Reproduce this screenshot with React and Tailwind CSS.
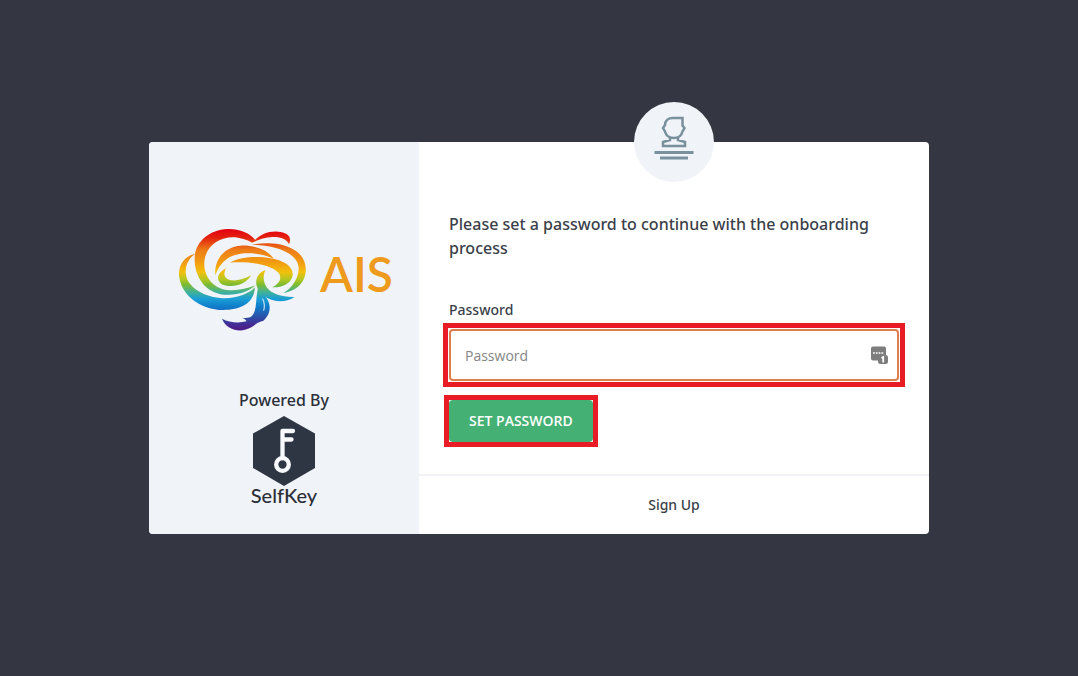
import { useState } from "react";

function AisLogo() {
  return (
    <svg width="145" height="120" viewBox="0 0 435 360" role="img" aria-label="AIS logo" className="shrink-0">
      <defs>
        <linearGradient id="rainbow" gradientUnits="userSpaceOnUse" x1="0" y1="28" x2="0" y2="334">
          <stop offset="0" stopColor="#e3000f" />
          <stop offset="0.08" stopColor="#e3200f" />
          <stop offset="0.2" stopColor="#ec7c18" />
          <stop offset="0.32" stopColor="#f29a12" />
          <stop offset="0.42" stopColor="#f2c00c" />
          <stop offset="0.49" stopColor="#b5c722" />
          <stop offset="0.54" stopColor="#7fbb2e" />
          <stop offset="0.61" stopColor="#45b391" />
          <stop offset="0.68" stopColor="#1b9fd6" />
          <stop offset="0.76" stopColor="#0f7cc9" />
          <stop offset="0.86" stopColor="#2b4fa8" />
          <stop offset="0.95" stopColor="#4a2490" />
          <stop offset="1" stopColor="#4f1c85" />
        </linearGradient>
      </defs>
      <g fill="url(#rainbow)">
        <path d="M258 62C238 38 208 26 172 27C118 29 76 66 74 112C72 168 104 218 162 224C202 227 236 216 256 196C226 208 186 216 154 206C116 192 98 154 104 118C112 70 160 46 204 53C222 56 238 62 246 68Z" />
        <path d="M76 101C44 108 26 134 27 164C30 222 90 270 160 270C206 270 252 254 255 202C236 222 196 238 150 234C94 228 48 198 47 156C47 132 58 114 76 101Z" />
        <path d="M136 166C132 118 164 80 212 77C256 75 296 92 312 117C282 102 246 97 212 101C172 106 148 132 136 166Z" />
        <path d="M180 128C212 110 262 108 302 115C346 122 374 144 367 170C361 190 338 203 306 202C326 192 336 178 328 162C314 138 244 122 180 128Z" />
        <path d="M168 145C138 160 138 184 158 194C188 205 228 194 243 166C218 180 190 186 174 178C162 172 160 160 168 145Z" />
        <path d="M286 150C260 160 252 184 264 208C280 238 332 258 374 231C336 232 304 222 290 202C280 186 278 168 286 150Z" />
        <path d="M246 74C300 64 350 70 382 96C410 118 414 156 398 184C386 204 364 216 340 219C366 204 386 176 386 144C384 98 316 76 246 74Z" />
        <path d="M250 66C270 42 296 33 324 35C350 37 368 48 357 73C350 56 330 50 308 51C286 52 268 58 250 66Z" />
        <path d="M264 205C282 222 298 240 299 260C300 277 292 293 280 302C262 306 256 314 244 322C214 340 170 332 156 296C178 308 206 310 230 304C227 299 223 296 217 293C230 295 240 293 246 288C262 270 256 238 264 205Z" />
      </g>
      <path d="M278 236C284 248 284 262 281 272" fill="none" stroke="#f0f3f8" strokeWidth="3" />
    </svg>
  );
}

function SelfKeyLogo() {
  return (
    <svg width="64" height="70" viewBox="0 0 64 70" aria-hidden="true">
      <path d="M32 0L63 17.5V52L32 70L1 52V17.5Z" fill="#2e3644" />
      <g fill="none" stroke="#f7f9fc" strokeWidth="4.3">
        <path d="M30.500 42V15H41M30.500 23.500H39.500" strokeLinecap="round" strokeLinejoin="round" />
        <circle cx="30.500" cy="48.500" r="6.300" />
      </g>
    </svg>
  );
}

function ProfileIcon() {
  return (
    <svg width="40" height="44" viewBox="0 0 40 44" fill="none" stroke="#78919d" strokeWidth="2.5" aria-hidden="true">
      <path d="M19 2H28.500V9.500L30.500 12L28.500 15.500C27.500 19.500 24.500 22 20 22C15.500 22 12 19.500 11 15.500L9 12L11 9C11 5 14 2 19 2Z" />
      <path d="M16 21.500V24L9 26V30H31V26L24 24V21.500" />
      <path d="M0.500 36.500H39.500M6 42H34" strokeWidth="2.800" />
    </svg>
  );
}

function PasswordManagerIcon() {
  return (
    <svg width="18" height="19" viewBox="0 0 18 19" aria-hidden="true">
      <rect x="1" y="1" width="15" height="14" rx="2" fill="#7d7d7d" />
      <path d="M3 7.500H14" stroke="#fff" strokeWidth="1.500" strokeDasharray="1.800 1" />
      <rect x="8" y="9.500" width="10" height="9" rx="2.500" fill="#7d7d7d" />
      <path d="M11.500 12.500L13.200 11.500V17" fill="none" stroke="#fff" strokeWidth="1.800" />
    </svg>
  );
}

export default function SetPassword() {
  const [password, setPassword] = useState("");

  const handleSubmit = (e) => {
    e.preventDefault();
  };

  return (
    <div className="min-h-screen flex items-center justify-center bg-[#343741] font-['Noto_Sans','Open_Sans',sans-serif] text-[#3b3f4a]">
      <div className="flex w-full max-w-[780px] rounded bg-white">
        {/* Branding */}
        <div className="w-[270px] shrink-0 flex flex-col items-center justify-between rounded-l bg-[#f0f3f8] pt-[78px] pb-[30px]">
          <div className="flex items-start gap-[5px] pr-[5px]">
            <AisLogo />
            <span className="pt-[30px] font-['Lato',sans-serif] text-5xl leading-none font-semibold text-[#ee9a1c]">AIS</span>
          </div>
          <div className="flex flex-col items-center text-[#2b2f38]">
            <div className="text-base font-medium mb-1">Powered By</div>
            <SelfKeyLogo />
            <div className="font-['Lato',sans-serif] text-xl leading-[18px] font-medium">SelfKey</div>
          </div>
        </div>

        {/* Form */}
        <div className="relative flex-1">
          <div className="absolute left-1/2 -top-10 -translate-x-1/2 size-20 rounded-full bg-[#f0f3f8] flex items-center justify-center pb-2">
            <ProfileIcon />
          </div>
          <form onSubmit={handleSubmit} className="px-[30px] pt-[70px] pb-[27px]">
            <p className="text-base font-medium">Please set a password to continue with the onboarding process</p>
            <label htmlFor="password" className="block mt-10 mb-[3px] text-sm font-medium">Password</label>
            <div className="relative -mx-[6px] border-5 border-[#e81c24] p-px">
              <input
                id="password"
                type="password"
                placeholder="Password"
                value={password}
                onChange={(e) => setPassword(e.target.value)}
                className="block w-full h-[52px] rounded border-2 border-[#dd7f4f] bg-white pl-[14px] pr-12 font-['Open_Sans',sans-serif] text-sm outline-none placeholder:text-[#858585]"
              />
              <span className="absolute right-3 top-1/2 -translate-y-1/2">
                <PasswordManagerIcon />
              </span>
            </div>
            <div className="w-max -ml-[5px] mt-2 border-5 border-[#e81c24]">
              <button type="submit" className="block h-[42px] px-5 rounded-sm bg-[#45b073] font-['Open_Sans',sans-serif] text-sm font-semibold text-white">SET PASSWORD</button>
            </div>
          </form>
          <div className="border-t-2 border-[#f0f2f5] py-[19px] text-center text-sm leading-5 font-medium">
            <a href="#signup">Sign Up</a>
          </div>
        </div>
      </div>
    </div>
  );
}
